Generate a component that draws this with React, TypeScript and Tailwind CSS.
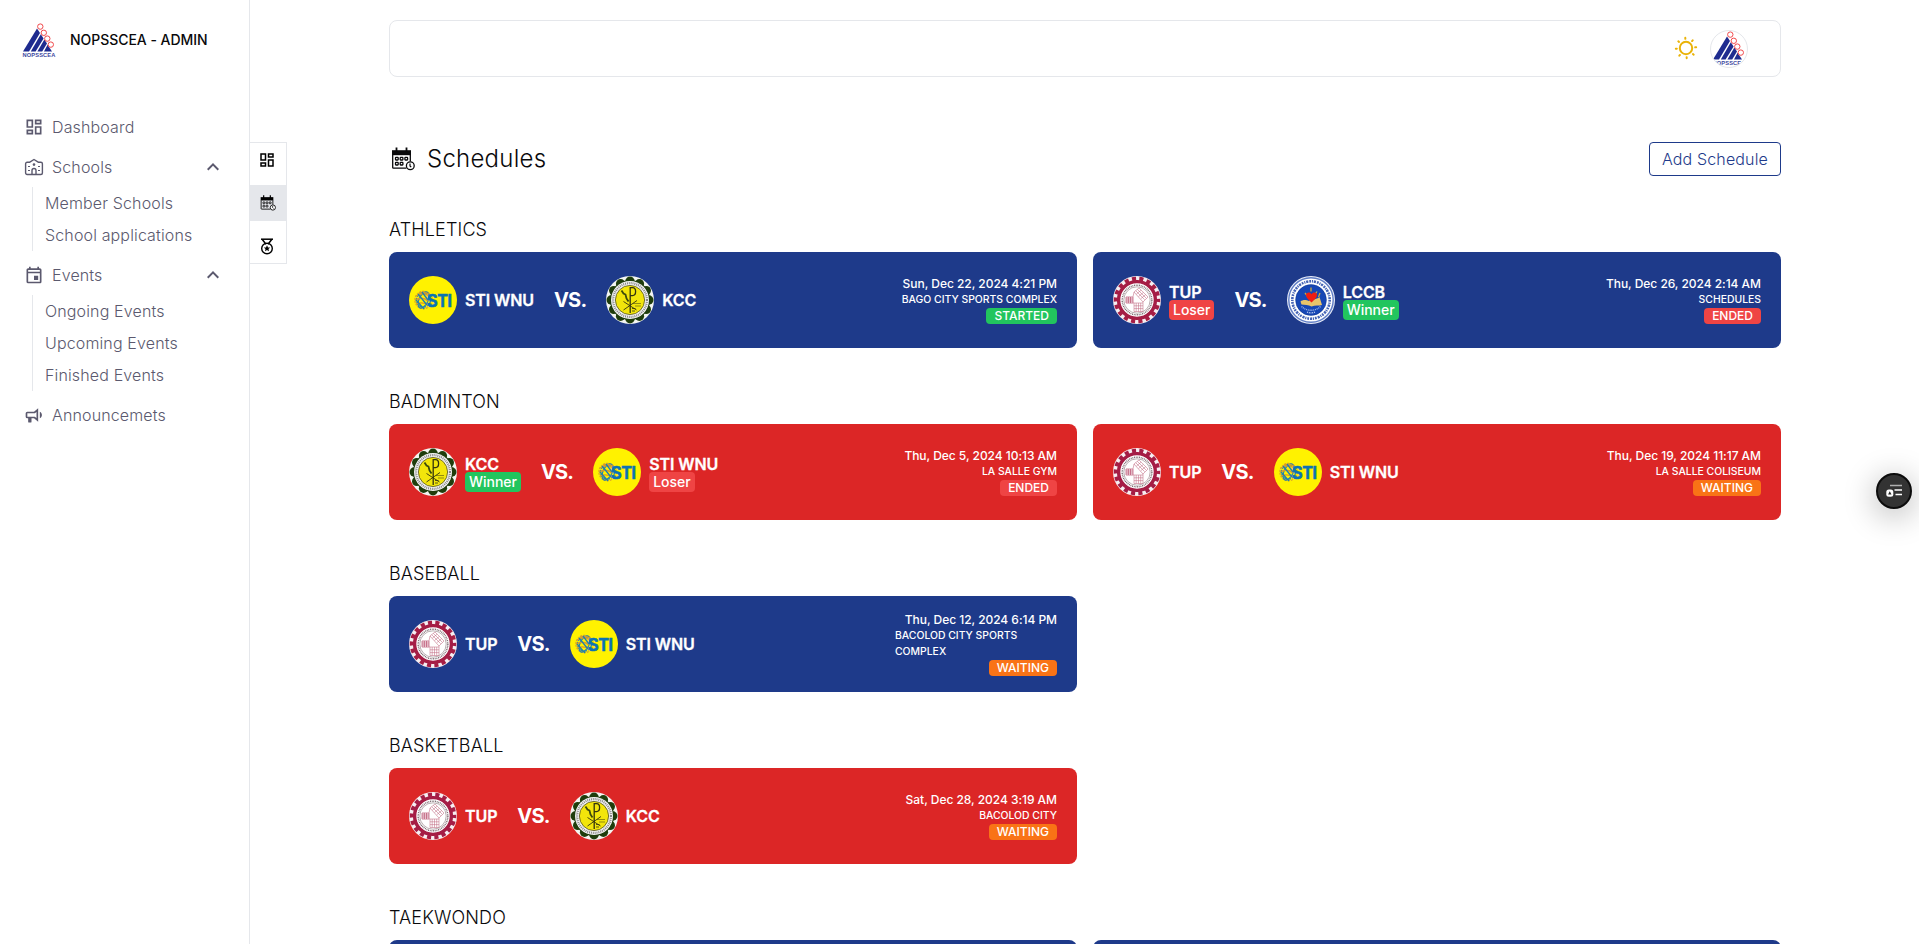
import type { ReactNode } from "react";
import { MdKeyboardArrowUp, MdOutlineDashboard, MdOutlineEvent } from "react-icons/md";

type School = "STI WNU" | "KCC" | "TUP" | "LCCB";
type Result = "Winner" | "Loser";
type Status = "STARTED" | "ENDED" | "WAITING";
type Team = { school: School; result?: Result };
type Match = { a: Team; b: Team; date: string; venue: string; status: Status };
type Sport = { name: string; blue: boolean; matches: Match[]; pending?: number };

const sports: Sport[] = [
  {
    name: "ATHLETICS",
    blue: true,
    matches: [
      { a: { school: "STI WNU" }, b: { school: "KCC" }, date: "Sun, Dec 22, 2024 4:21 PM", venue: "BAGO CITY SPORTS COMPLEX", status: "STARTED" },
      { a: { school: "TUP", result: "Loser" }, b: { school: "LCCB", result: "Winner" }, date: "Thu, Dec 26, 2024 2:14 AM", venue: "SCHEDULES", status: "ENDED" },
    ],
  },
  {
    name: "BADMINTON",
    blue: false,
    matches: [
      { a: { school: "KCC", result: "Winner" }, b: { school: "STI WNU", result: "Loser" }, date: "Thu, Dec 5, 2024 10:13 AM", venue: "LA SALLE GYM", status: "ENDED" },
      { a: { school: "TUP" }, b: { school: "STI WNU" }, date: "Thu, Dec 19, 2024 11:17 AM", venue: "LA SALLE COLISEUM", status: "WAITING" },
    ],
  },
  {
    name: "BASEBALL",
    blue: true,
    matches: [
      { a: { school: "TUP" }, b: { school: "STI WNU" }, date: "Thu, Dec 12, 2024 6:14 PM", venue: "BACOLOD CITY SPORTS COMPLEX", status: "WAITING" },
    ],
  },
  {
    name: "BASKETBALL",
    blue: false,
    matches: [
      { a: { school: "TUP" }, b: { school: "KCC" }, date: "Sat, Dec 28, 2024 3:19 AM", venue: "BACOLOD CITY", status: "WAITING" },
    ],
  },
  { name: "TAEKWONDO", blue: true, matches: [], pending: 2 },
];

const statusColor: Record<Status, string> = {
  STARTED: "bg-[#22c55e]",
  ENDED: "bg-[#ef4444]",
  WAITING: "bg-[#f97316]",
};

function BrandLogo({ className }: { className: string }) {
  return (
    <svg viewBox="0 0 34 35" className={className}>
      <g fill="#1e2b8f">
        <path d="M15 5.5 18 10 7 28.5H1z" />
        <path d="M18.8 11.2 21.6 15.4 13.6 28.5H8.8z" />
        <path d="M22.4 16.6 25 20.6 20.2 28.5H15.4z" />
        <path d="M25.6 21.8 30 28.5H22z" />
      </g>
      <g fill="#fff" stroke="#f0484b" strokeWidth="1">
        <circle cx="18.3" cy="3.6" r="2.7" />
        <circle cx="21.8" cy="9.8" r="2.7" />
        <circle cx="25.3" cy="15.6" r="2.7" />
        <circle cx="28.8" cy="21.6" r="2.7" />
      </g>
      <text x="17" y="34.3" textAnchor="middle" textLength="33" lengthAdjust="spacingAndGlyphs" fontFamily="Liberation Sans, sans-serif" fontSize="6" fontWeight="700" fill="#3c489e">
        NOPSSCEA
      </text>
    </svg>
  );
}

function StiLogo() {
  return (
    <svg viewBox="0 0 48 48" className="size-12">
      <circle cx="24" cy="24" r="24" fill="#fff200" />
      <g fill="none" strokeWidth="1.3">
        <circle cx="14.5" cy="24" r="8.6" stroke="#d9a32b" strokeDasharray="2 1" />
        <ellipse cx="14.5" cy="24" rx="4.5" ry="8.6" stroke="#2c86a8" transform="rotate(25 14.5 24)" />
        <circle cx="14.5" cy="24" r="7" stroke="#2c86a8" strokeDasharray="3 1.2" />
        <path d="M7 20c5-3 9-3 13 0M6 24c6-3 10-2 13 1M7 28c5-2 9-1 12 1M10 17c4-1 8 0 10 1" stroke="#d99a2b" />
        <path d="M9 18l9 11M13 16l6 8M7 24l8 9" stroke="#1f7fae" />
      </g>
      <text
        x="18"
        y="30.7"
        textLength="25"
        lengthAdjust="spacingAndGlyphs"
        fontFamily="Liberation Sans, sans-serif"
        fontSize="18"
        fontWeight="700"
        fill="#0b73b4"
        stroke="#0b73b4"
        strokeWidth="0.7"
      >
        STI
      </text>
    </svg>
  );
}

const scallops = Array.from({ length: 12 }, (_, i) => (i * Math.PI) / 6);

function KccLogo() {
  return (
    <svg viewBox="0 0 48 48" className="size-12">
      <circle cx="24" cy="24" r="24" fill="#f3f5f1" />
      <g fill="#1f3d0c">
        <circle cx="24" cy="24" r="20" />
        {scallops.map((a) => (
          <circle key={a} cx={24 + 18.8 * Math.cos(a)} cy={24 + 18.8 * Math.sin(a)} r="4.7" />
        ))}
      </g>
      <circle cx="24" cy="24" r="19" fill="#f4f4f4" />
      <circle cx="24" cy="24" r="16.9" fill="none" stroke="#888" strokeWidth="2.2" strokeDasharray="1 0.9" />
      <circle cx="24" cy="24" r="14.6" fill="#f2e50b" stroke="#3b3b12" strokeWidth="0.7" />
      <g fill="none" stroke="#33330f">
        <path d="M24.2 11v26" strokeWidth="1.3" />
        <path d="M24 11.6h2.6c4 0 4 8 0 8H24" strokeWidth="1.3" />
        <path d="M17.5 34 31 24.5M17.5 25.5 30.5 34" strokeWidth="0.9" />
        <path d="M15.5 14.5l2 3 2 1 1 4 2 3" strokeWidth="1.8" stroke="#3d4a0c" />
        <path d="M27 27.5h8M29 30h6" strokeWidth="0.5" />
        <path d="M26 32.5h3.5M26 35h3" strokeWidth="0.8" />
      </g>
    </svg>
  );
}

function TupLogo() {
  return (
    <svg viewBox="0 0 48 48" className="size-12">
      <circle cx="24" cy="24" r="24" fill="#f6eef1" />
      <circle cx="24" cy="24" r="18.4" fill="#fff" stroke="#a51d45" strokeWidth="3.4" />
      <circle cx="24" cy="24" r="21.3" fill="none" stroke="#a51d45" strokeWidth="4" strokeDasharray="4.1 3.335" strokeDashoffset="2" />
      <circle cx="24" cy="24" r="14.8" fill="none" stroke="#77666c" strokeWidth="1.5" strokeDasharray="0.9 0.8" />
      <circle cx="24" cy="24" r="13.2" fill="#fff" stroke="#8d7a80" strokeWidth="0.6" />
      <g fill="none" stroke="#c06a82" strokeWidth="0.55">
        <path d="M21 16l5-4 9 9-5 5zM22.7 14.7l9 9M24.3 13.3l9 9M23.3 18.2l4.8-4M25.5 20.5l4.8-4M27.8 22.7l4.8-4" />
        <path d="M13 21h7v6h-7zM15.3 21v6M17.6 21v6M13 23h7M13 25h7" stroke="#a51d45" />
        <path d="M21 27h9v8.5h-9zM23.2 27v8.5M25.5 27v8.5M27.7 27v8.5M21 29.8h9M21 32.6h9" />
        <path d="M20 21l1-5M20 27l1 0M30 27v-1" />
      </g>
    </svg>
  );
}

function LccbLogo() {
  return (
    <svg viewBox="0 0 48 48" className="size-12">
      <circle cx="24" cy="24" r="24" fill="#e9edf8" />
      <circle cx="24" cy="24" r="22.2" fill="#fff" stroke="#5f7dc6" strokeWidth="1.4" />
      <circle cx="24" cy="24" r="18.7" fill="none" stroke="#4564b5" strokeWidth="2.6" strokeDasharray="1.8 0.9 1.1 0.8 2.2 1" />
      <circle cx="24" cy="24" r="15.4" fill="#1747b5" stroke="#10358c" strokeWidth="0.5" />
      <path d="M13.5 25.5c2-2 6-2 8-.5 3-2 8-1 11-4l2.500 8c-3 1-7 0-10.500 1.500-3-2-7-1.500-10-2z" fill="#e9c46a" />
      <path d="M18 17l2.500 3M24 11.500v4M30 15.500l-2 3M33 17l-1.500 4" stroke="#cfa93c" strokeWidth="1.3" />
      <path d="M24.500 26.500c-3.500-3-5.500-5.200-5.500-7.400 0-3 4-3.600 5.500-.9 1.500-2.700 5.500-2.100 5.500.9 0 2.200-2 4.400-5.500 7.400z" fill="#f01d12" />
      <path d="M14.500 30.500c5 5 14 5 19 0" fill="none" stroke="#9fb4e6" strokeWidth="1.4" strokeDasharray="1 0.8" />
      <path d="M20 36c3 1.200 5 1.200 8 0" fill="none" stroke="#cfd9f3" strokeWidth="1.2" strokeDasharray="1 0.8" />
    </svg>
  );
}

const logos: Record<School, () => ReactNode> = {
  "STI WNU": StiLogo,
  KCC: KccLogo,
  TUP: TupLogo,
  LCCB: LccbLogo,
};

function CalendarClock({ className }: { className: string }) {
  return (
    <svg viewBox="0 0 24 24" className={className} fill="none" stroke="currentColor">
      <path d="M1 3.200h19v5h-19z" fill="currentColor" stroke="none" />
      <path d="M5.500 0.500v4M15.500 0.500v4" strokeWidth="1.800" />
      <path d="M1.700 8v12.500q0 .7.700.7h13M19.300 8v6.500" strokeWidth="1.300" />
      <g strokeWidth="1.300">
        <rect x="4.500" y="10.400" width="2.700" height="2.600" rx="0.500" />
        <rect x="9.200" y="10.400" width="2.700" height="2.600" rx="0.500" />
        <rect x="13.900" y="10.400" width="2.700" height="2.600" rx="0.500" />
        <rect x="4.500" y="15.400" width="2.700" height="2.600" rx="0.500" />
        <rect x="9.200" y="15.400" width="2.700" height="2.600" rx="0.500" />
      </g>
      <circle cx="19.300" cy="18.800" r="3.900" fill="#fff" strokeWidth="1.300" />
      <path d="M19 16.500v2.400l1.200 1.300" strokeWidth="1.200" />
    </svg>
  );
}

function MedalIcon() {
  return (
    <svg viewBox="0 0 18 18" className="-mt-px size-[18px]" fill="none" stroke="currentColor">
      <path d="M3 2.200h12" strokeWidth="1.500" />
      <path d="M4.300 2.500 8 7.200M13.700 2.500 10 7.200" strokeWidth="1.500" />
      <circle cx="9" cy="11.500" r="5.300" strokeWidth="1.400" />
      <path
        d="M9 8.300l1 2.100 2.200.2-1.700 1.500.5 2.200-2-1.200-2 1.200.5-2.200-1.700-1.500 2.200-.2z"
        fill="currentColor"
        stroke="none"
      />
    </svg>
  );
}

function SchoolIcon() {
  return (
    <svg viewBox="0 0 20 20" className="size-5" fill="none" stroke="currentColor" strokeWidth="1.400" strokeLinejoin="round">
      <path d="M5.800 5.200 10 2.500l4.200 2.700h2.700a1.500 1.500 0 0 1 1.500 1.500v9.300a1.500 1.500 0 0 1-1.500 1.500H3.100a1.500 1.500 0 0 1-1.500-1.500V6.700a1.500 1.500 0 0 1 1.500-1.500z" />
      <path d="M8 17.500v-4q0-2 2-2t2 2v4" />
      <circle cx="10" cy="7.600" r="1.300" fill="currentColor" stroke="none" />
      <path d="M4 9.500h2M4 13.500h2M14 9.500h2M14 13.500h2" strokeWidth="1.200" />
    </svg>
  );
}

function BullhornIcon() {
  return (
    <svg viewBox="0 0 24 24" className="size-5" fill="currentColor">
      <path d="M12 8H4a2 2 0 0 0-2 2v4a2 2 0 0 0 2 2h1v4a1 1 0 0 0 1 1h2a1 1 0 0 0 1-1v-4h3l5 4V4l-5 4m3 7.600L13 14H4v-4h9l2-1.600v7.200m6.500-3.600c0 1.710-.96 3.260-2.500 4V8c1.530.75 2.500 2.300 2.500 4z" />
    </svg>
  );
}

const rays = [-4, 41, 86, 131, 176, 221, 266, 311];

function SunIcon() {
  return (
    <svg viewBox="0 0 24 24" className="-mt-0.5 size-6" fill="none" stroke="#eab308" strokeLinecap="round">
      <circle cx="12" cy="12" r="6.200" strokeWidth="2" />
      {rays.map((r) => (
        <path key={r} d="M12 1.800v1" strokeWidth="2" transform={`rotate(${r} 12 12)`} />
      ))}
    </svg>
  );
}

function NavItem({ icon, label, open }: { icon: ReactNode; label: string; open?: boolean }) {
  return (
    <a className="flex h-10 items-center gap-2 px-6">
      {icon}
      <span className="grow">{label}</span>
      {open && <MdKeyboardArrowUp className="size-6" />}
    </a>
  );
}

function SubList({ items }: { items: string[] }) {
  return (
    <ul className="mb-1 ml-8 border-l border-gray-200">
      {items.map((item) => (
        <li key={item} className="flex h-8 items-center pl-3">
          {item}
        </li>
      ))}
    </ul>
  );
}

function TeamView({ team }: { team: Team }) {
  const Logo = logos[team.school];
  return (
    <div className="flex items-center gap-2">
      <Logo />
      <div className="flex flex-col items-start">
        <span className="text-base leading-6 font-semibold tracking-[-0.1px] [-webkit-text-stroke:0.3px_white]">{team.school}</span>
        {team.result && (
          <span
            className={`-mt-1 rounded px-1 text-sm leading-5 font-medium tracking-[-0.03px] ${team.result === "Winner" ? "bg-[#22c55e]" : "bg-[#ef4444]"}`}
          >
            {team.result}
          </span>
        )}
      </div>
    </div>
  );
}

function MatchCard({ match, blue }: { match: Match; blue: boolean }) {
  return (
    <div className={`flex h-24 items-center justify-between rounded-lg px-5 text-white ${blue ? "bg-[#1e3a8a]" : "bg-[#dc2626]"}`}>
      <div className="flex items-center gap-5">
        <TeamView team={match.a} />
        <span className="text-xl font-bold tracking-[-0.04em]">VS.</span>
        <TeamView team={match.b} />
      </div>
      <div className="flex max-w-[162px] flex-col items-end font-medium tracking-normal">
        <span className="text-xs leading-4 tracking-[-0.04px] whitespace-nowrap">{match.date}</span>
        <span className="text-[10.4px] leading-4">{match.venue}</span>
        <span className={`rounded px-2 text-xs leading-4 ${statusColor[match.status]}`}>{match.status}</span>
      </div>
    </div>
  );
}

export default function App() {
  return (
    <div className="flex h-[944px] w-full overflow-hidden bg-white font-['Inter',sans-serif] font-light tracking-[0.14px] text-[#09090b]">
      <aside className="w-[250px] shrink-0 border-r border-gray-200">
        <div className="flex h-20 items-center gap-3.5 pl-[22px]">
          <BrandLogo className="h-[35px] w-[34px]" />
          <span className="text-sm font-medium tracking-[-0.04px]">NOPSSCEA - ADMIN</span>
        </div>
        <nav className="mt-[27px] text-[#5b596e]">
          <NavItem icon={<MdOutlineDashboard className="size-5" />} label="Dashboard" />
          <NavItem icon={<SchoolIcon />} label="Schools" open />
          <SubList items={["Member Schools", "School applications"]} />
          <NavItem icon={<MdOutlineEvent className="size-5" />} label="Events" open />
          <SubList items={["Ongoing Events", "Upcoming Events", "Finished Events"]} />
          <NavItem icon={<BullhornIcon />} label="Announcemets" />
        </nav>
      </aside>

      <div className="mt-[142px] flex h-[122px] w-[37px] shrink-0 flex-col gap-[7px] border border-l-0 border-gray-200 text-black">
        <div className="flex h-[35px] shrink-0 items-center pl-2">
          <MdOutlineDashboard className="-mt-px size-[18px]" />
        </div>
        <div className="flex h-9 shrink-0 items-center bg-gray-200 pl-2.5">
          <CalendarClock className="size-4" />
        </div>
        <div className="flex h-9 shrink-0 items-center pl-2">
          <MedalIcon />
        </div>
      </div>

      <main className="ml-[102px] w-[1392px] shrink-0 pt-5">
        <header className="flex h-[57px] items-center justify-end gap-3 rounded-lg border border-gray-200 pr-8">
          <SunIcon />
          <div className="flex size-[38px] items-center justify-center overflow-hidden rounded-full border border-gray-200">
            <BrandLogo className="h-[35px] w-[34px] shrink-0" />
          </div>
        </header>

        <div className="mt-[65px] flex h-[34px] items-center justify-between">
          <h1 className="flex items-center gap-3 pl-0.5 text-2xl tracking-[0.24px]">
            <CalendarClock className="size-6" />
            Schedules
          </h1>
          <button className="h-[34px] w-[132px] rounded border border-[#1e3a8a] text-[#1e3a8a]">Add Schedule</button>
        </div>

        <div className="mt-10 flex flex-col gap-10">
          {sports.map((sport) => (
            <section key={sport.name}>
              <h2 className="mb-2 text-lg leading-7">{sport.name}</h2>
              <div className="grid grid-cols-2 gap-4">
                {sport.matches.map((match) => (
                  <MatchCard key={match.date} match={match} blue={sport.blue} />
                ))}
                {Array.from({ length: sport.pending ?? 0 }, (_, i) => (
                  <div key={i} className="h-24 rounded-lg bg-[#1e3a8a]" />
                ))}
              </div>
            </section>
          ))}
        </div>
      </main>

      <button className="fixed top-[473px] right-[7px] flex size-9 items-center justify-center rounded-full border-2 border-[#0c0c0c] bg-[#333] shadow-[0_6px_30px_4px_rgba(0,0,0,0.22)]">
        <svg viewBox="0 0 16 14" className="h-3.5 w-4">
          <path d="M4 1.500H16" stroke="#b0b0b0" strokeWidth="1.500" />
          <path d="M8.500 6H16M9.500 10.500H16" stroke="#fff" strokeWidth="1.300" />
          <rect x="0.300" y="5.500" width="7" height="7.200" rx="2.500" fill="#fff" />
          <path d="M3.800 7.200 5.500 10.500H2.100z" fill="#222" />
        </svg>
      </button>
    </div>
  );
}
